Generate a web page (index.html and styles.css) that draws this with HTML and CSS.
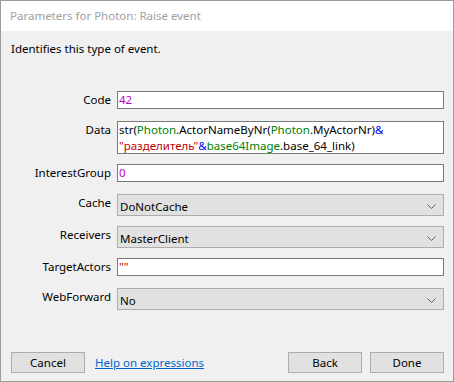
FILE: index.html
```html
<!Doctype html>
<html>
    <head>
        <title>Parameters for Photon: Raise event</title>
        <link rel="stylesheet" href="styles.css">
    </head>
    <body>
        <div class='dialog'>
            <div class='title-bar'>Parameters for Photon: Raise event</div>

            <div class='content'>
                <p class='description'>Identifies this type of event.</p>

                <!-- Parameter rows -->
                <div class='form'>
                    <div class='row'>
                        <label>Code</label>
                        <div class='input'><span class='num'>42</span></div>
                    </div>

                    <div class='row row-tall'>
                        <label>Data</label>
                        <div class='input input-multi'>str(<span class='obj'>Photon</span>.ActorNameByNr(<span class='obj'>Photon</span>.MyActorNr)<span class='op'>&amp;</span><br><span class='str'>"разделитель"</span><span class='op'>&amp;</span><span class='obj'>base64Image</span>.base_64_link)</div>
                    </div>

                    <div class='row'>
                        <label>InterestGroup</label>
                        <div class='input'><span class='num'>0</span></div>
                    </div>

                    <div class='row row-select'>
                        <label>Cache</label>
                        <div class='select'>
                            <span>DoNotCache</span>
                            <svg width="9" height="5" viewBox="0 0 9 5"><polyline points="0.5,0.5 4.5,4.5 8.5,0.5" fill="none" stroke="#606060" stroke-width="1"/></svg>
                        </div>
                    </div>

                    <div class='row row-select'>
                        <label>Receivers</label>
                        <div class='select'>
                            <span>MasterClient</span>
                            <svg width="9" height="5" viewBox="0 0 9 5"><polyline points="0.5,0.5 4.5,4.5 8.5,0.5" fill="none" stroke="#606060" stroke-width="1"/></svg>
                        </div>
                    </div>

                    <div class='row'>
                        <label>TargetActors</label>
                        <div class='input'><span class='str'>""</span></div>
                    </div>

                    <div class='row row-select'>
                        <label>WebForward</label>
                        <div class='select'>
                            <span>No</span>
                            <svg width="9" height="5" viewBox="0 0 9 5"><polyline points="0.5,0.5 4.5,4.5 8.5,0.5" fill="none" stroke="#606060" stroke-width="1"/></svg>
                        </div>
                    </div>
                </div>

                <!-- Buttons -->
                <div class='footer'>
                    <button class='btn'>Cancel</button>
                    <a class='help-link' href='#'>Help on expressions</a>
                    <div class='spacer'></div>
                    <button class='btn'>Back</button>
                    <button class='btn'>Done</button>
                </div>
            </div>
        </div>
    </body>
</html>
```

FILE: styles.css
```css
/* CSS here */
html, body {
    margin: 0;
    padding: 0;
}

body {
    font-family: "Segoe UI", "Noto Sans", sans-serif;
    font-size: 11.5px;
    color: #000;
}

.dialog {
    box-sizing: border-box;
    width: 454px;
    height: 382px;
    border: 1px solid #9c9c9c;
    background-color: #f0f0f0;
    display: flex;
    flex-direction: column;
}

.title-bar {
    height: 30px;
    line-height: 30px;
    padding-left: 9px;
    background-color: #fff;
    color: #a0a0a0;
    font-size: 11.5px;
}

.content {
    flex: 1;
    display: flex;
    flex-direction: column;
    padding: 10px 9px 8px 10px;
}

.description {
    margin: 0;
    line-height: 16px;
}

.form {
    margin-top: 34px;
}

.row {
    display: flex;
    height: 30px;
}

.row-tall {
    height: 43px;
}

.row-select {
    height: 32px;
}

.row label {
    width: 100px;
    text-align: right;
    padding-top: 1px;
    padding-right: 6px;
    line-height: 16px;
}

.input {
    box-sizing: border-box;
    flex: 1;
    height: 18px;
    border: 1px solid #7a7a7a;
    background-color: #fff;
    padding-left: 1px;
    line-height: 16px;
    white-space: nowrap;
}

.input-multi {
    height: 33px;
    white-space: normal;
}

.num {
    color: #c000c0;
}

.obj {
    color: #008000;
}

.op {
    color: #0000ff;
}

.str {
    color: #c00000;
}

.select {
    box-sizing: border-box;
    flex: 1;
    height: 22px;
    border: 1px solid #adadad;
    background-color: #e1e1e1;
    display: flex;
    align-items: center;
    justify-content: space-between;
    padding: 2px 7px 0 2px;
}

.select svg {
    display: block;
}

.footer {
    margin-top: auto;
    display: flex;
    align-items: center;
}

.btn {
    box-sizing: border-box;
    width: 74px;
    height: 21px;
    border: 1px solid #adadad;
    background-color: #e1e1e1;
    font-family: inherit;
    font-size: 11.5px;
    color: #000;
    padding: 0;
}

.help-link {
    margin-left: 10px;
    color: #0066cc;
}

.spacer {
    flex: 1;
}

.btn + .btn {
    margin-left: 8px;
}
```
